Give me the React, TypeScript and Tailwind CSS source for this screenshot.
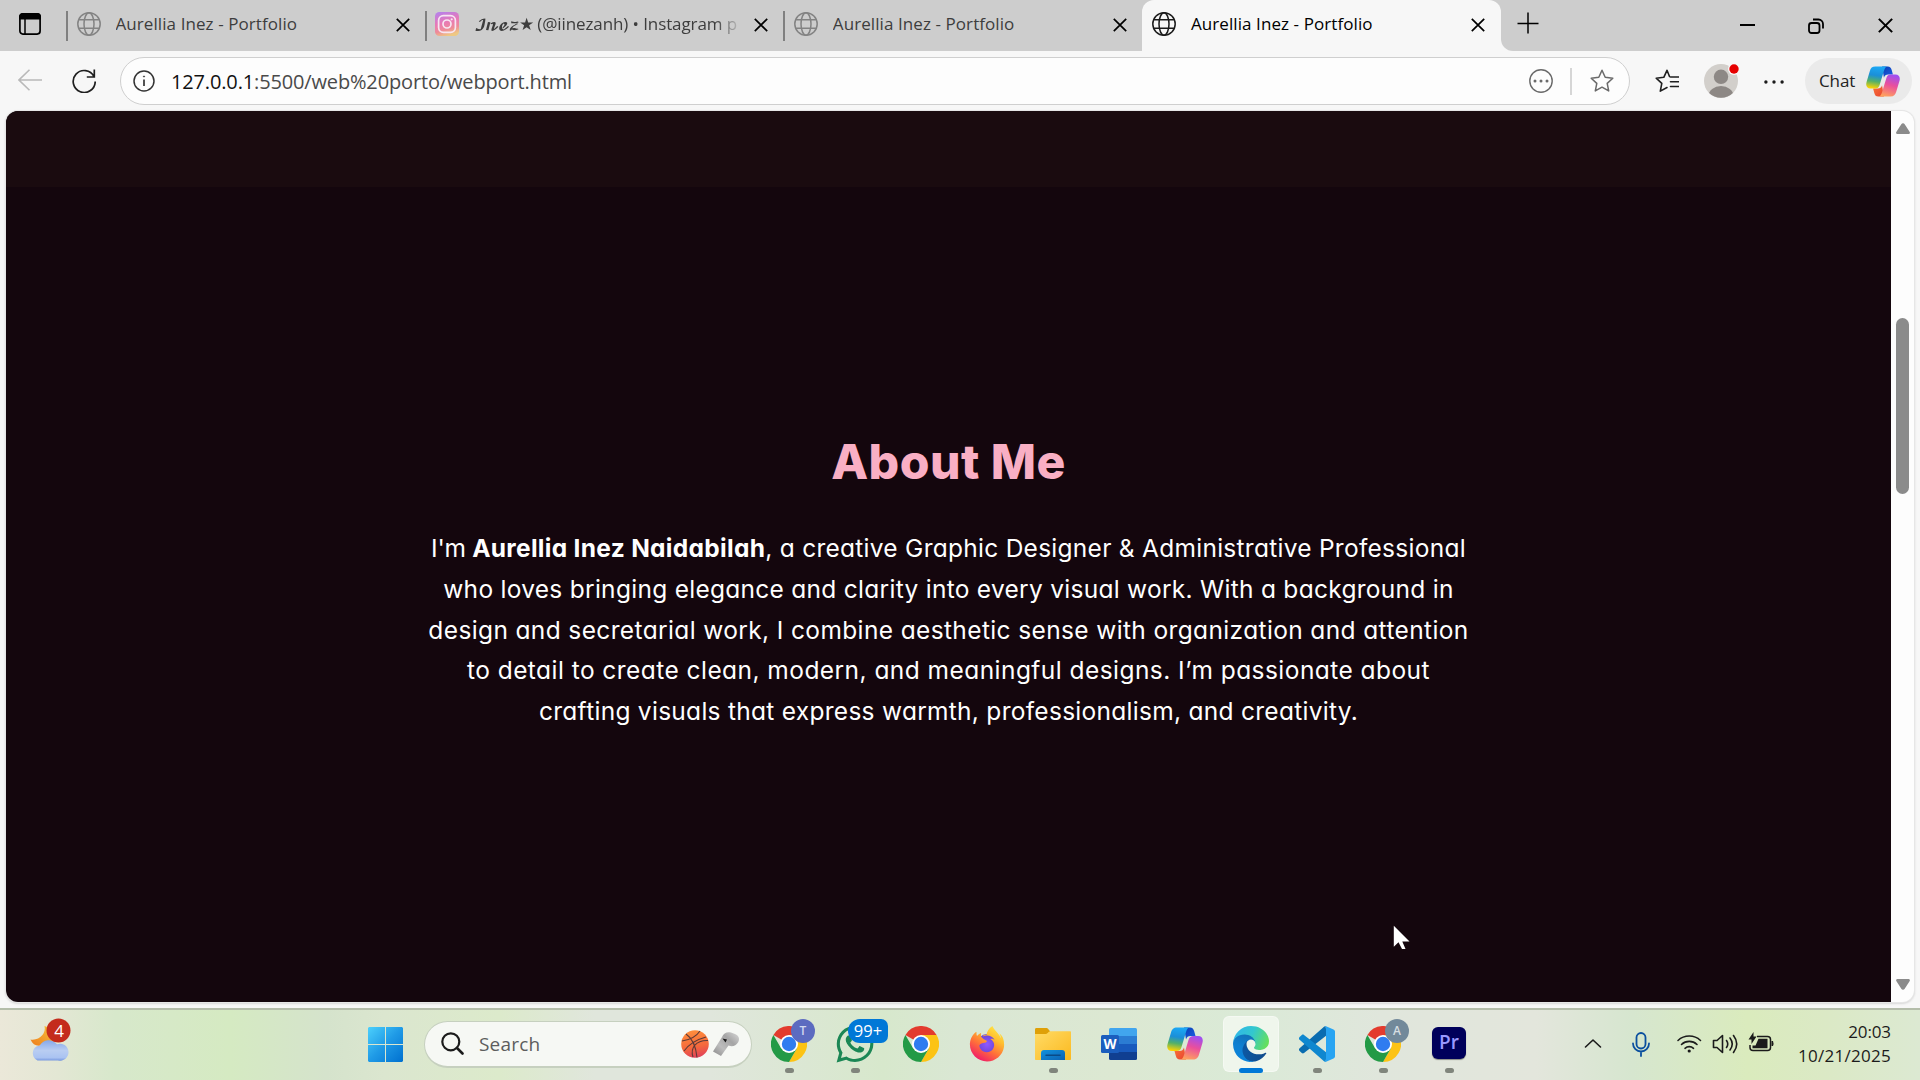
import React from "react";
import { FaFirefoxBrowser, FaWhatsapp } from "react-icons/fa";

const UI = "font-['Open_Sans','Noto_Sans',sans-serif]";

function Globe({ className }: { className: string }) {
  return (
    <svg viewBox="0 0 24 24" className={className} fill="none" stroke="currentColor" strokeWidth="1.5">
      <circle cx="12" cy="12" r="11.2" />
      <ellipse cx="12" cy="12" rx="5" ry="11.2" />
      <path d="M1.8 7.8h20.4M1.8 16.2h20.4" />
    </svg>
  );
}

function Cross({ className, w = 1.7 }: { className: string; w?: number }) {
  return (
    <svg viewBox="0 0 14 14" className={className} fill="none" stroke="currentColor" strokeWidth={w}>
      <path d="M.8.8l12.4 12.4M13.2.8L.8 13.2" />
    </svg>
  );
}

function InstagramIcon() {
  return (
    <svg viewBox="0 0 24 24" className="size-6">
      <defs>
        <linearGradient id="ig" x1=".2" y1="0" x2=".5" y2="1">
          <stop offset="0" stopColor="#b681ea" />
          <stop offset=".45" stopColor="#e878b6" />
          <stop offset=".75" stopColor="#ee8c98" />
          <stop offset="1" stopColor="#eec983" />
        </linearGradient>
      </defs>
      <rect width="24" height="24" rx="4.5" fill="url(#ig)" />
      <g fill="none" stroke="#f7e6f2" strokeWidth="1.7">
        <rect x="3.6" y="3.6" width="16.8" height="16.8" rx="4.8" />
        <circle cx="12" cy="12" r="4" />
      </g>
      <circle cx="16.7" cy="7.3" r="1.1" fill="#f7e6f2" />
    </svg>
  );
}

function Copilot({ id, className }: { id: string; className: string }) {
  return (
    <svg viewBox="0 0 36 33" className={className} preserveAspectRatio="none">
      <defs>
        <linearGradient id={id + "a"} x1=".5" y1="0" x2=".35" y2="1">
          <stop offset="0" stopColor="#1ba8f5" />
          <stop offset=".4" stopColor="#1b8fd8" />
          <stop offset=".68" stopColor="#52b06a" />
          <stop offset="1" stopColor="#ffd400" />
        </linearGradient>
        <linearGradient id={id + "b"} x1=".6" y1="0" x2=".3" y2="1">
          <stop offset="0" stopColor="#a04ff0" />
          <stop offset=".45" stopColor="#ea4f9c" />
          <stop offset="1" stopColor="#ffa45c" />
        </linearGradient>
        <linearGradient id={id + "c"} x1="0" y1="0" x2="1" y2="1">
          <stop offset="0" stopColor="#0a3fb0" />
          <stop offset="1" stopColor="#1b5fe8" />
        </linearGradient>
        <linearGradient id={id + "d"} x1="0" y1="0" x2="1" y2="1">
          <stop offset="0" stopColor="#f9743a" />
          <stop offset="1" stopColor="#e8432f" />
        </linearGradient>
      </defs>
      <path d="M17 .5h6c2.500 0 3.500 1.300 4.200 3.800l1.300 4.700h-5c-2.500 0-3.700 1-4.500 3.500z" fill={`url(#${id}c)`} />
      <path d="M19 32.500h-6c-2.500 0-3.500-1.300-4.200-3.800L7.500 24h5c2.500 0 3.700-1 4.500-3.500z" fill={`url(#${id}d)`} />
      <path d="M10 .5h13c-2 0-3 1.500-3.800 4l-4.700 15.500c-.9 3-2.300 4-5 4H5C.8 24-.5 21 .6 17L4 5.500C5 2 6.500.5 10 .5z" fill={`url(#${id}a)`} />
      <path d="M26 32.500H13c2 0 3-1.500 3.800-4L21.500 13c.9-3 2.300-4 5-4H31c4.200 0 5.500 3 4.400 7L32 27.500c-1 3.500-2.500 5-6 5z" fill={`url(#${id}b)`} />
    </svg>
  );
}

function Tab({ children, title }: { children: React.ReactNode; title: React.ReactNode }) {
  return (
    <div className="flex h-[51px] w-[358.67px] shrink-0 items-start">
      <div className="mt-[11px] h-[30px] w-0.5 shrink-0 bg-[#808080]" />
      <div className="mt-3 ml-[8.5px] size-6 shrink-0">{children}</div>
      <div className="ml-[15px] h-[49px] w-[268px] shrink-0 overflow-hidden text-[17px] leading-[48px] whitespace-nowrap text-[#3d3d3d]">
        {title}
      </div>
      <Cross className="mt-[18px] ml-[12px] size-[14px] shrink-0 text-black" />
    </div>
  );
}

const title = <span className="tracking-[0.08px]">Aurellia Inez - Portfolio</span>;

function TabStrip() {
  return (
    <div className="flex h-[51px] bg-[#cdcdcd]">
      <div className="w-[66px] shrink-0 pt-[13px] pl-[19px]">
        <svg viewBox="0 0 22 22" className="size-[22px]">
          <rect x=".9" y=".9" width="20.200" height="20.200" rx="3" fill="none" stroke="#000" strokeWidth="1.700" />
          <path d="M0 6.500V4a4 4 0 0 1 4-4h14a4 4 0 0 1 4 4v2.500z" />
          <path d="M6 6v15" stroke="#000" strokeWidth="1.500" />
        </svg>
      </div>
      <Tab title={title}>
        <Globe className="size-6 text-[#838383]" />
      </Tab>
      <Tab
        title={
          <span className="block w-[268px] [mask-image:linear-gradient(to_right,black_90%,transparent)]">
            <span className="font-['DejaVu_Math_TeX_Gyre','DejaVu_Serif',serif] text-[15px] tracking-[-1.7px]">𝓘𝓷𝓮𝔃</span>
            <span className="ml-px tracking-[-1px]">★</span>
            <span className="tracking-[-0.1px]"> (@iinezanh) • Instagram p</span>
          </span>
        }
      >
        <InstagramIcon />
      </Tab>
      <Tab title={title}>
        <Globe className="size-6 text-[#838383]" />
      </Tab>
      <div className="flex bg-[#f7f7f7]">
        <div className="h-[51px] w-[359px] rounded-br-[12px] bg-[#cdcdcd]">
          <div className="flex h-[51px] items-start rounded-t-[12px] bg-[#f7f7f7]">
            <Globe className="mt-3 ml-[10px] size-6 text-[#1b1b1b]" />
            <div className="ml-[15px] w-[208px] text-[17px] leading-[48px] text-black">{title}</div>
            <Cross className="mt-[18px] ml-[72px] size-[14px] text-black" />
          </div>
        </div>
      </div>
      <div className="flex flex-1 bg-[#f7f7f7]">
        <div className="flex flex-1 items-start rounded-bl-[12px] bg-[#cdcdcd]">
          <svg viewBox="0 0 22 22" className="mt-[12px] ml-[16px] size-[22px]" stroke="#000" strokeWidth="1.500">
            <path d="M11 .5v21M.5 11.500h21" />
          </svg>
          <div className="mt-6 ml-[201px] h-0.5 w-[15px] bg-black" />
          <svg viewBox="0 0 16 16" className="mt-[18px] ml-[53px] size-4" fill="none" stroke="#000" strokeWidth="1.800">
            <rect x="1" y="5" width="10.500" height="10" rx="2.500" />
            <path d="M5 1.500h5.500a4.500 4.500 0 0 1 4.500 4.500v4.500" />
          </svg>
          <Cross className="mt-[18px] ml-[54px] size-[15px] text-black" w={1.9} />
        </div>
      </div>
    </div>
  );
}

function Toolbar() {
  return (
    <div className="flex h-[60px] items-start bg-[#f7f7f7]">
      <svg viewBox="0 0 24 22" className="mt-[18px] ml-[18px] h-[22px] w-6" fill="none" stroke="#b9b9b9" strokeWidth="1.600">
        <path d="M24 11H1M11.500.8L1 11l10.500 10.200" />
      </svg>
      <svg viewBox="0 0 24 24" className="mt-[18px] ml-[30px] size-6" fill="none" stroke="#1f1f1f" strokeWidth="1.700">
        <path d="M22 7.500A11 11 0 1 0 23.200 12.500M22.300.5v7.500h-7.500" />
      </svg>
      <div className="mt-[6px] ml-6 flex h-12 w-[1510px] items-center rounded-full border border-[#cfcfcf] bg-[#fdfdfd]">
        <svg viewBox="0 0 22 22" className="ml-[12px] size-[22px]" fill="none" stroke="#333" strokeWidth="1.500">
          <circle cx="11" cy="11" r="10" />
          <path d="M11 9.500v6.500" strokeWidth="1.700" />
          <circle cx="11" cy="6.500" r=".6" fill="#333" strokeWidth=".8" />
        </svg>
        <div className="ml-[16px] w-[1358px] pt-px text-[20px] tracking-[-0.15px] whitespace-nowrap text-[#4a4a4a]">
          <span className="text-[#111]">127.0.0.1</span>:5500/web%20porto/webport.html
        </div>
        <svg viewBox="0 0 24 24" className="size-6 shrink-0" fill="#6a6a6a">
          <circle cx="12" cy="12" r="11.200" fill="none" stroke="#6a6a6a" strokeWidth="1.400" />
          <circle cx="6" cy="12" r="1.500" /><circle cx="12" cy="12" r="1.500" /><circle cx="18" cy="12" r="1.500" />
        </svg>
        <div className="ml-[17px] h-[27px] w-0.5 shrink-0 bg-[#d6d6d6]" />
        <svg viewBox="0 0 24 24" className="ml-[18px] size-6 shrink-0" fill="none" stroke="#6a6a6a" strokeWidth="1.500" strokeLinejoin="round">
          <path d="M12 1.300l3.200 7 7.600.9-5.600 5.200 1.500 7.500L12 18.200l-6.700 3.700 1.500-7.500L1.200 9.200l7.600-.9z" />
        </svg>
      </div>
      <svg viewBox="0 0 24 24" className="mt-[18px] ml-[25px] size-6" fill="none" stroke="#1f1f1f" strokeWidth="1.600" strokeLinejoin="round" strokeLinecap="round">
        <path d="M14.500 7.500L12 1.300l-3.200 7-7.600.9 5.600 5.200-1.500 7.700 6.700-3.600" />
        <path d="M15.500 8h8M15.500 12.700h8M15.500 17.500h8" />
      </svg>
      <svg viewBox="0 0 36 36" className="mt-3 ml-6 size-9">
        <defs><clipPath id="av"><circle cx="18" cy="18" r="16.800" /></clipPath></defs>
        <circle cx="18" cy="18" r="17" fill="#d2cfcb" />
        <circle cx="18" cy="13.800" r="7.200" fill="#8d8885" />
        <ellipse cx="18" cy="33" rx="12.500" ry="10" fill="#8d8885" clipPath="url(#av)" />
        <circle cx="31" cy="6" r="6" fill="#f7f7f7" />
        <circle cx="31" cy="6" r="4.700" fill="#e60000" />
      </svg>
      <svg viewBox="0 0 20 4" className="mt-[29px] ml-[25px] h-1 w-5" fill="#1b1b1b">
        <circle cx="1.900" cy="2" r="1.700" /><circle cx="10" cy="2" r="1.700" /><circle cx="18.100" cy="2" r="1.700" />
      </svg>
      <div className="mt-[7px] ml-[21px] flex h-[46px] w-[107px] items-center rounded-full bg-[#eaeaea]">
        <div className="ml-[14px] w-[47px] text-[17px] tracking-[-0.1px] text-[#222]">Chat</div>
        <Copilot id="cp1" className="h-[31px] w-[34px]" />
      </div>
    </div>
  );
}

function ScrollArrow({ className }: { className: string }) {
  return (
    <svg viewBox="0 0 16 12" className={className} fill="#8b8b8b">
      <path d="M6.300 1.200a2 2 0 0 1 3.400 0l5 7.800c.6 1-.2 2-1.200 2h-11c-1 0-1.800-1-1.200-2z" />
    </svg>
  );
}

function Page() {
  return (
    <div className="flex h-[897px] bg-[#f7f7f7] pr-1 pl-[6px]">
      <div className="flex h-[891px] w-[1908px] overflow-hidden rounded-[12px] bg-[#fdfdfd] shadow-[0_0_0_1px_#e6e6e6,0_1px_2px_1px_#d8d8d8]">
        <div className="w-[1885px] bg-[#14060d]">
          <div className="h-[76px] bg-[#1a0b0f]" />
          <div className="pt-[239px] text-center font-['Inter',sans-serif] whitespace-nowrap [font-feature-settings:'cv11']">
            <h2 className="h-[84px] text-[48px] leading-[72px] font-extrabold tracking-[0.5px] text-[#f9afc4]">About Me</h2>
            <p className="mt-[18px] text-[24.5px] leading-[40.8px] text-white">
              <span className="block tracking-[0.27px]">
                <span className="tracking-[-0.3px]">I'm </span>
                <strong className="tracking-[0.3px]">Aurellia Inez Naidabilah</strong>, a creative Graphic Designer &amp; Administrative Professional
              </span>
              <span className="block tracking-[0.28px]">who loves bringing elegance and clarity into every visual work. With a background in</span>
              <span className="block tracking-[0.37px]">design and secretarial work, I combine aesthetic sense with organization and attention</span>
              <span className="block tracking-[0.449px]">to detail to create clean, modern, and meaningful designs. I’m passionate about</span>
              <span className="block tracking-[0.28px]">crafting visuals that express warmth, professionalism, and creativity.</span>
            </p>
          </div>
        </div>
        <div className="flex flex-1 flex-col items-center">
          <ScrollArrow className="mt-3 h-3 w-4" />
          <div className="mt-[183px] h-[176px] w-[13px] rounded-full bg-[#8b8b8b]" />
          <ScrollArrow className="mt-[484px] h-3 w-4 rotate-180" />
        </div>
      </div>
    </div>
  );
}

function Chrome() {
  return (
    <svg viewBox="0 0 36 36" className="size-9">
      <path d="M18 18L2.400 9A18 18 0 0 1 33.600 9z" fill="#e33b2e" />
      <path d="M18 9h15.600A18 18 0 0 1 18 36l7.800-13.500z" fill="#fcc314" />
      <path d="M10.200 22.500L2.400 9A18 18 0 0 0 18 36l7.800-13.500z" fill="#239a46" />
      <circle cx="18" cy="18" r="9" fill="#fff" />
      <circle cx="18" cy="18" r="7.200" fill="#2f7cf0" />
    </svg>
  );
}

function Edge() {
  return (
    <svg viewBox="0 0 256 256" className="size-9">
      <defs>
        <linearGradient id="e1" x1="0" x2="1"><stop offset="0" stopColor="#0c59a4" /><stop offset="1" stopColor="#114a8b" /></linearGradient>
        <linearGradient id="e2" x1=".6" y1="0" x2=".3" y2="1"><stop offset="0" stopColor="#126fb5" /><stop offset=".5" stopColor="#0f80d2" /><stop offset="1" stopColor="#0a84dc" /></linearGradient>
        <linearGradient id="e3" x1="0" y1=".3" x2="1" y2=".6"><stop offset="0" stopColor="#2fb6ea" /><stop offset=".5" stopColor="#33c7ce" /><stop offset="1" stopColor="#66e05a" /></linearGradient>
      </defs>
      <path fill="url(#e1)" d="M231 190.500c-3.400 1.800-6.900 3.400-10.500 4.700a101.500 101.500 0 0 1-35.900 6.500c-47.300 0-88.500-32.500-88.500-74.300 0-11.400 6.400-21.900 16.400-27.300-42.800 1.800-53.800 46.400-53.800 72.500 0 73.900 68.100 81.400 82.800 81.400 7.900 0 19.800-2.300 27-4.600l1.300-.4a128.300 128.300 0 0 0 66.600-52.800 4 4 0 0 0-5.400-5.700z" />
      <path fill="url(#e2)" d="M105.700 241.400a79.200 79.200 0 0 1-22.700-21.300 80.700 80.700 0 0 1 29.500-120c3.200-1.500 8.500-4.100 15.600-4a32.400 32.400 0 0 1 25.700 13 31.900 31.900 0 0 1 6.300 18.700c0-.2 24.500-79.600-80-79.600-43.900 0-80 41.700-80 78.200a130.200 130.200 0 0 0 12.100 56 128 128 0 0 0 156.400 67 75.500 75.500 0 0 1-62.800-8z" />
      <path fill="url(#e3)" d="M152.300 148.900c-.8 1-3.300 2.500-3.300 5.700 0 2.600 1.700 5.100 4.700 7.200 14.400 10 41.500 8.700 41.600 8.700a59.600 59.600 0 0 0 30.300-8.300 61.400 61.400 0 0 0 30.400-52.900c.3-22.400-8-37.300-11.300-43.900C223.500 23.900 177.700 0 128 0A128 128 0 0 0 0 126.200c.5-36.500 36.800-66 80-66 3.500 0 23.500.3 42 10a72.600 72.600 0 0 1 30.900 29.300c6.100 10.600 7.200 24.100 7.200 29.500s-2.700 13.300-7.800 19.900z" />
    </svg>
  );
}

function TaskButton({ children, mark }: { children: React.ReactNode; mark?: "idle" | "active" }) {
  return (
    <div className="relative flex h-[70px] w-[66px] shrink-0 items-start justify-center">
      {mark === "active" && <div className="absolute top-[6px] left-[5px] h-14 w-14 rounded-md border border-white/40 bg-[#eff6ec]" />}
      <div className="relative mt-4 h-9 w-9">{children}</div>
      {mark === "idle" && <div className="absolute top-[58px] left-[29px] h-[5px] w-[9px] rounded-full bg-[#80857c]" />}
      {mark === "active" && <div className="absolute top-[58px] left-[21px] h-[5px] w-6 rounded-full bg-[#0078d7]" />}
    </div>
  );
}

function Taskbar() {
  return (
    <div className="flex h-[72px] items-start border-t-2 border-[#b4bdaa] bg-[linear-gradient(to_right,#ebe8d9_0%,#e3e7d4_3%,#d7e8cb_6%,#d5eac2_12%,#d5e3cc_17%,#dbe6cf_20%,#dceacb_26%,#e0e6dc_31%,#e0e6dc_37%,#d7e8cc_46%,#dae7d4_50%,#dce8d2_58%,#daead7_65%,#e0e6dc_72%,#e3e6dc_80%,#d6e6cf_85%,#daebbd_91%,#dbe9c5_95%,#dce9d2_100%)]">
      <svg viewBox="0 0 42 44" className="mt-2 ml-[29px] h-11 w-[42px]">
        <defs>
          <linearGradient id="cl" x1="0" y1="0" x2="0" y2="1"><stop offset="0" stopColor="#86a8ea" /><stop offset=".5" stopColor="#b9cdf2" /><stop offset=".85" stopColor="#aac3f2" /><stop offset="1" stopColor="#7495de" /></linearGradient>
          <linearGradient id="mn" x1="1" y1="0" x2="0" y2="1"><stop offset="0" stopColor="#f7c63e" /><stop offset="1" stopColor="#ee7d1c" /></linearGradient>
        </defs>
        <path d="M15.500 8c2 7-5 15-14 13.500C4 27 8 29 14 27l12-4V12z" fill="url(#mn)" />
        <path d="M8.500 42.500a8 8 0 0 1-1-14 8.500 8.500 0 0 1 3-.7 10.500 10.500 0 0 1 17.500-1.500 8.500 8.500 0 1 1 1 16.200z" fill="url(#cl)" />
        <circle cx="29.500" cy="12.500" r="12" fill="#c42b1c" />
        <text x="30" y="18.500" textAnchor="middle" fill="#fff" fontSize="17" className={UI}>4</text>
      </svg>
      <svg viewBox="0 0 35 35" className="mt-[17px] ml-[297px] size-[35px]">
        <defs><linearGradient id="wn" gradientUnits="userSpaceOnUse" x1="0" y1="0" x2="35" y2="35"><stop offset="0" stopColor="#4cd0fc" /><stop offset=".5" stopColor="#1f9ae6" /><stop offset="1" stopColor="#0070cf" /></linearGradient></defs>
        <path d="M1 0h16v17H0V1zM18 0h16l1 1v16H18zM0 18h17v17H1l-1-1zM18 18h17v16l-1 1H18z" fill="url(#wn)" />
      </svg>
      <div className="mt-[10.500px] ml-[21px] flex h-[47px] w-[328px] items-center rounded-full border border-b-2 border-[#c6d0bf] bg-[#f6f8f4]">
        <svg viewBox="0 0 23 23" className="ml-4 size-[23px]" fill="none" stroke="#1b1b1b" strokeWidth="2.200" strokeLinecap="round">
          <circle cx="9.800" cy="9.800" r="8.500" /><path d="M16 16l5.500 5.500" strokeWidth="2.600" />
        </svg>
        <div className="ml-[15px] w-[202px] pt-[2px] text-[19px] tracking-[0.2px] text-[#5d5d5d]">Search</div>
        <svg viewBox="0 0 28 28" className="size-7">
          <defs><linearGradient id="bb" x1=".4" y1="0" x2=".6" y2="1"><stop offset="0" stopColor="#ff8f3c" /><stop offset=".6" stopColor="#f5683c" /><stop offset="1" stopColor="#e0405c" /></linearGradient></defs>
          <circle cx="14" cy="14" r="13.800" fill="url(#bb)" />
          <path d="M5 4C11 8 15 17 16 27.500M1 11c7-1 14-4 18-10M12 27c-3-9 3-17 15-16.500M3 21C8 14 14 10 25 7" fill="none" stroke="#5b3a38" strokeWidth="1.100" />
        </svg>
        <svg viewBox="0 0 28 26" className="ml-[3px] h-[26px] w-7">
          <defs><linearGradient id="wh" x1="0" y1="1" x2="1" y2="0"><stop offset="0" stopColor="#888" /><stop offset=".35" stopColor="#bdbdbd" /><stop offset=".65" stopColor="#a5a5a5" /><stop offset="1" stopColor="#dadada" /></linearGradient></defs>
          <path d="M1 20.500L10 6c1.500-4 5-5.500 9-4.500l4 1.500c4 1.500 5 5 3 8.500s-6 4.500-9.500 3L9 25z" fill="url(#wh)" />
          <path d="M10.500 7.500l4.500 1-1.500 3z" fill="#151515" />
        </svg>
      </div>
      <div className="ml-1 flex w-[792px]">
        <TaskButton mark="idle">
          <Chrome />
          <div className="absolute top-[-7px] left-[20px] flex size-6 items-center justify-center rounded-full bg-[#5c6bc0] text-[12px] font-semibold text-[#d3d8f0]">T</div>
        </TaskButton>
        <TaskButton mark="idle">
          <FaWhatsapp className="-m-[3px] size-[42px] text-[#1b8755]" />
          <div className="absolute top-[-7px] left-[11px] flex h-6 w-10 items-center justify-center rounded-l-[12px] rounded-r-[7px] bg-[#0078d7] text-[16.500px] text-white">99+</div>
        </TaskButton>
        <TaskButton><Chrome /></TaskButton>
        <TaskButton>
          <svg width="0" height="0" className="absolute">
            <defs><linearGradient id="ff" x1=".9" y1="0" x2=".3" y2="1"><stop offset="0" stopColor="#fff04a" /><stop offset=".35" stopColor="#ffbd2f" /><stop offset=".65" stopColor="#ff7139" /><stop offset="1" stopColor="#f0196a" /></linearGradient></defs>
          </svg>
          <div className="absolute top-2 left-2 size-5 rounded-full bg-[radial-gradient(circle,#9059ff,#5b3cc4)]" />
          <FaFirefoxBrowser className="relative size-9 [&_path]:fill-[url(#ff)]" />
        </TaskButton>
        <TaskButton mark="idle">
          <svg viewBox="0 0 36 36" className="size-9">
            <defs>
              <linearGradient id="fo" x1="0" y1="0" x2="1" y2="1"><stop offset="0" stopColor="#ffdb66" /><stop offset="1" stopColor="#fbb91f" /></linearGradient>
              <linearGradient id="fb" x1="0" y1="0" x2="1" y2="1"><stop offset="0" stopColor="#1192dc" /><stop offset="1" stopColor="#0c62b4" /></linearGradient>
            </defs>
            <path d="M0 3.500C0 2.500.6 2 1.500 2H11c1 0 1.600.3 2.200 1l2 2.500L12 9H0z" fill="#dfa008" />
            <path d="M0 8h10c1.500 0 2-.4 3-1.300l.6-.6c.6-.6 1-.9 2-.9H35c.6 0 1 .4 1 1V33c0 .6-.4 1-1 1H1c-.6 0-1-.4-1-1z" fill="url(#fo)" />
            <path d="M6 34V27c0-2 1.200-3 3-3h18c1.800 0 3 1 3 3v7z" fill="url(#fb)" />
            <path d="M11 29.200h14" stroke="#0a4a86" strokeWidth="1.500" strokeLinecap="round" />
          </svg>
        </TaskButton>
        <TaskButton>
          <svg viewBox="0 0 36 36" className="size-9">
            <path d="M8 3.500Q8 2 9.500 2h25Q36 2 36 3.500V10H8z" fill="#41a5ee" /><path d="M8 10h28v8H8z" fill="#2b7cd3" />
            <path d="M8 18h28v8H8z" fill="#185abd" /><path d="M8 26h28v6.500q0 1.500-1.500 1.500h-25Q8 34 8 32.500z" fill="#103f91" />
            <rect y="9" width="18" height="18" rx="1.500" fill="#1b5ebe" />
            <text x="9" y="23" textAnchor="middle" fontSize="13.500" fontWeight="700" fill="#fff" className={UI}>W</text>
          </svg>
        </TaskButton>
        <TaskButton><Copilot id="cp2" className="mt-[1px] h-[33px] w-9" /></TaskButton>
        <TaskButton mark="active"><Edge /></TaskButton>
        <TaskButton mark="idle">
          <svg viewBox="0 0 36 36" className="size-9">
            <path d="M26.500 0L28 9 5 27c-.8.6-1.500.5-2.200 0l-2.200-2c-.9-.8-.9-2 0-2.800L25 .8z" fill="#0a6cb0" />
            <path d="M26.500 36L28 27 5 9c-.8-.6-1.500-.5-2.200 0L.6 11c-.9.800-.9 2 0 2.800L25 35.200z" fill="#0f87cf" />
            <path d="M26.500 36c-1-.2-1.500-.8-1.500-.8 1 .8 2 0 2-1.200V2c0-1.200-1-2-2-1.200 0 0 .5-.6 1.500-.8l8 3.500c1 .5 1.500 1.300 1.500 2.300v24.400c0 1-.5 1.800-1.500 2.300z" fill="#28a4f2" />
          </svg>
        </TaskButton>
        <TaskButton mark="idle">
          <Chrome />
          <div className="absolute top-[-7px] left-[20px] flex size-6 items-center justify-center rounded-full bg-[#72899a] text-[12px] font-semibold text-[#d6dee2]">A</div>
        </TaskButton>
        <TaskButton mark="idle">
          <div className="mt-px ml-[1px] flex h-8 w-[34px] items-center justify-center rounded-[6px] bg-[#00005b] pb-[2px] text-[19px] font-semibold text-[#9999ff] shadow-[0_1px_1px_#0006]">Pr</div>
        </TaskButton>
      </div>
      <svg viewBox="0 0 162 30" className="mt-5 ml-[33px] h-[30px] w-[162px] shrink-0" fill="none" stroke="#1b1b1b" strokeWidth="1.600" strokeLinecap="round" strokeLinejoin="round">
        <path d="M4.500 17l7.500-7 7.500 7" />
        <g stroke="#0a4f9e" strokeWidth="1.800"><rect x="55.500" y="3" width="9" height="15.500" rx="4.500" /><path d="M52 13.500a8 8 0 0 0 16 0M60 21.500V26" /></g>
        <path d="M97 10.500a16.500 16.500 0 0 1 22.500 0M100.500 14.500a11.300 11.300 0 0 1 15.500 0M104 18.300a6.300 6.300 0 0 1 8.500 0" />
        <circle cx="108.200" cy="21" r="1.600" fill="#1b1b1b" stroke="none" />
        <path d="M132.500 10.500h3.500l5.500-5v17l-5.500-5h-3.500zM145.500 10.500q2.500 3.500 0 7M149 8q4.500 6 0 12M152.500 5.500q6.500 8.500 0 17" />
      </svg>
      <svg viewBox="0 0 26 22" className="mt-[22px] ml-[5px] h-[22px] w-[26px] shrink-0">
        <path d="M9 4.500h10.500a3 3 0 0 1 3 3v8a3 3 0 0 1-3 3H5a3 3 0 0 1-3-3V13" fill="none" stroke="#1b1b1b" strokeWidth="1.500" />
        <path d="M10.500 6.800h9v9.500H4.500V13.500h3zM23.500 9h1.500q1 2.500 0 5h-1.500z" fill="#1b1b1b" />
        <path d="M5.500 0v4.500h3L3.500 12V7.500H.5z" fill="#1b1b1b" />
      </svg>
      <div className="mt-[9.500px] mr-[29px] ml-auto text-right text-[17px] leading-[24px] text-[#1b1b1b]">
        <div className="tracking-[-0.1px]">20:03</div>
        <div className="tracking-[0.28px]">10/21/2025</div>
      </div>
    </div>
  );
}

export default function App() {
  return (
    <div className={`relative h-[1080px] w-[1920px] overflow-hidden bg-[#f7f7f7] ${UI}`}>
      <TabStrip />
      <Toolbar />
      <Page />
      <Taskbar />
      <svg viewBox="0 0 17 25" className="absolute top-[925px] left-[1393px] h-[25px] w-[17px]">
        <path d="M.8.8v21l4.700-4.500 3.500 6.700h3.500L9.300 16.500h7.200z" fill="#fff" />
      </svg>
    </div>
  );
}
